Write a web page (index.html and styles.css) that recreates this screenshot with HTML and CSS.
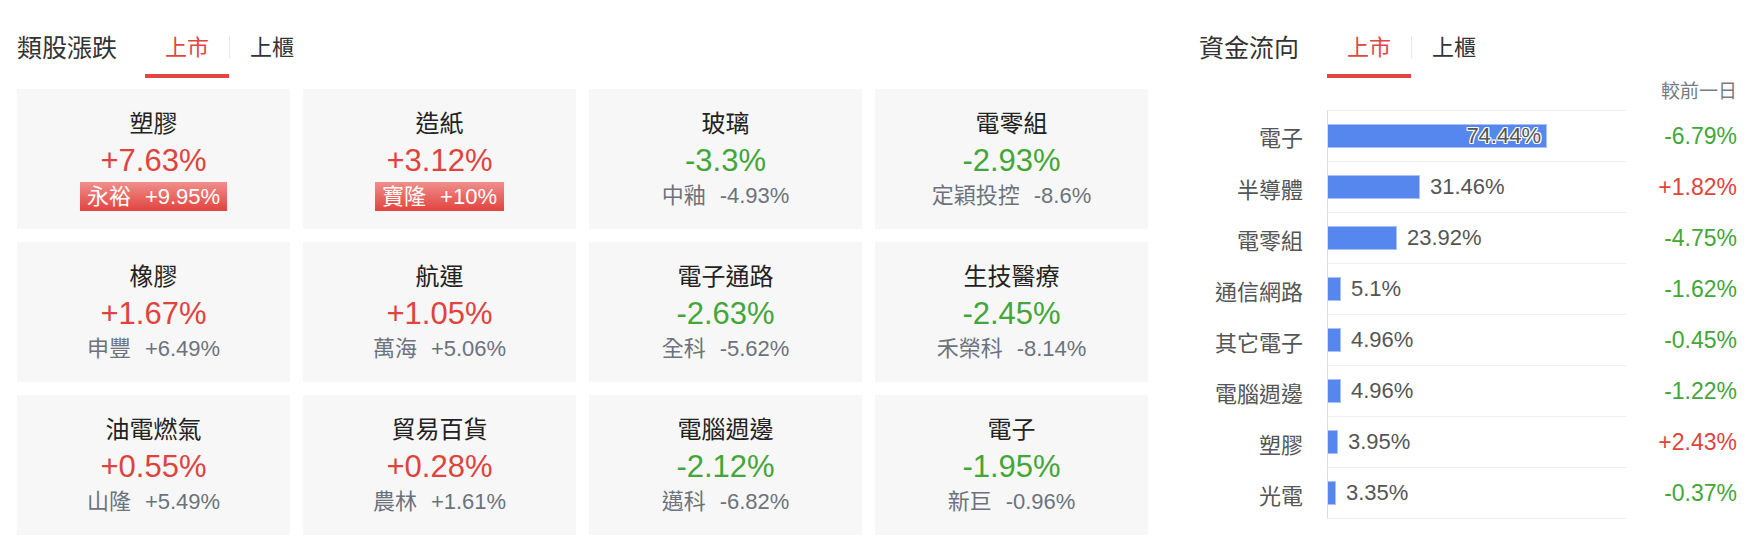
FILE: index.html
```html
<!DOCTYPE html>
<html lang="zh-Hant">
<head>
	<meta charset="UTF-8">
	<meta name="viewport" content="width=device-width, initial-scale=1.0">
	<link rel="stylesheet" href="styles.css">
</head>
<body>
	<div class="page">
		<section class="sectors">
			<div class="head">
				<h2>類股漲跌</h2>
				<ul class="tabs">
					<li class="on">上市</li>
					<li class="sep"></li>
					<li>上櫃</li>
				</ul>
			</div>
			<div class="grid">
				<div class="card up">
					<div class="name">塑膠</div>
					<div class="pct">+7.63%</div>
					<div class="lead limit"><span>永裕</span><b>+9.95%</b></div>
				</div>
				<div class="card up">
					<div class="name">造紙</div>
					<div class="pct">+3.12%</div>
					<div class="lead limit"><span>寶隆</span><b>+10%</b></div>
				</div>
				<div class="card down">
					<div class="name">玻璃</div>
					<div class="pct">-3.3%</div>
					<div class="lead"><span>中釉</span><b>-4.93%</b></div>
				</div>
				<div class="card down">
					<div class="name">電零組</div>
					<div class="pct">-2.93%</div>
					<div class="lead"><span>定穎投控</span><b>-8.6%</b></div>
				</div>

				<div class="card up">
					<div class="name">橡膠</div>
					<div class="pct">+1.67%</div>
					<div class="lead"><span>申豐</span><b>+6.49%</b></div>
				</div>
				<div class="card up">
					<div class="name">航運</div>
					<div class="pct">+1.05%</div>
					<div class="lead"><span>萬海</span><b>+5.06%</b></div>
				</div>
				<div class="card down">
					<div class="name">電子通路</div>
					<div class="pct">-2.63%</div>
					<div class="lead"><span>全科</span><b>-5.62%</b></div>
				</div>
				<div class="card down">
					<div class="name">生技醫療</div>
					<div class="pct">-2.45%</div>
					<div class="lead"><span>禾榮科</span><b>-8.14%</b></div>
				</div>

				<div class="card up">
					<div class="name">油電燃氣</div>
					<div class="pct">+0.55%</div>
					<div class="lead"><span>山隆</span><b>+5.49%</b></div>
				</div>
				<div class="card up">
					<div class="name">貿易百貨</div>
					<div class="pct">+0.28%</div>
					<div class="lead"><span>農林</span><b>+1.61%</b></div>
				</div>
				<div class="card down">
					<div class="name">電腦週邊</div>
					<div class="pct">-2.12%</div>
					<div class="lead"><span>邁科</span><b>-6.82%</b></div>
				</div>
				<div class="card down">
					<div class="name">電子</div>
					<div class="pct">-1.95%</div>
					<div class="lead"><span>新巨</span><b>-0.96%</b></div>
				</div>
			</div>
		</section>

		<section class="flow">
			<div class="head">
				<h2>資金流向</h2>
				<ul class="tabs">
					<li class="on">上市</li>
					<li class="sep"></li>
					<li>上櫃</li>
				</ul>
			</div>
			<div class="cmp">較前一日</div>
			<ul class="chart">
				<li>
					<span class="lbl">電子</span>
					<span class="plot"><i class="bar" style="width:219px"><em>74.44%</em></i></span>
					<span class="chg down">-6.79%</span>
				</li>
				<li>
					<span class="lbl">半導體</span>
					<span class="plot"><i class="bar" style="width:92px"></i><em>31.46%</em></span>
					<span class="chg up">+1.82%</span>
				</li>
				<li>
					<span class="lbl">電零組</span>
					<span class="plot"><i class="bar" style="width:69px"></i><em>23.92%</em></span>
					<span class="chg down">-4.75%</span>
				</li>
				<li>
					<span class="lbl">通信網路</span>
					<span class="plot"><i class="bar" style="width:13px"></i><em>5.1%</em></span>
					<span class="chg down">-1.62%</span>
				</li>
				<li>
					<span class="lbl">其它電子</span>
					<span class="plot"><i class="bar" style="width:13px"></i><em>4.96%</em></span>
					<span class="chg down">-0.45%</span>
				</li>
				<li>
					<span class="lbl">電腦週邊</span>
					<span class="plot"><i class="bar" style="width:13px"></i><em>4.96%</em></span>
					<span class="chg down">-1.22%</span>
				</li>
				<li>
					<span class="lbl">塑膠</span>
					<span class="plot"><i class="bar" style="width:10px"></i><em>3.95%</em></span>
					<span class="chg up">+2.43%</span>
				</li>
				<li>
					<span class="lbl">光電</span>
					<span class="plot"><i class="bar" style="width:8px"></i><em>3.35%</em></span>
					<span class="chg down">-0.37%</span>
				</li>
			</ul>
		</section>
	</div>
</body>
</html>
```

FILE: styles.css
```css
body {
	margin: 0;
	background: #fff;
	font-family: 'Liberation Sans', 'Noto Sans CJK TC', sans-serif;
	color: #222;
}
ul {
	list-style: none;
	margin: 0;
	padding: 0;
}
.page {
	display: flex;
	align-items: flex-start;
	padding-left: 17px;
}

/* section header with tabs */
.head {
	display: flex;
	align-items: flex-start;
	height: 78px;
}
.head h2 {
	margin: 0 28px 0 0;
	padding-top: 33px;
	font-size: 25px;
	line-height: 30px;
	font-weight: 400;
	color: #333;
}
.tabs {
	display: flex;
	align-items: flex-start;
}
.tabs li {
	padding: 33px 20px 0 20px;
	height: 41px;
	font-size: 22px;
	line-height: 30px;
	color: #333;
	border-bottom: 4px solid transparent;
}
.tabs li.on {
	color: #e0463f;
	border-bottom-color: #e0463f;
}
.tabs li.sep {
	padding: 0;
	margin-top: 36px;
	width: 1px;
	height: 22px;
	border: 0;
	background: #e8e8e8;
}

/* sector cards */
.sectors {
	width: 1131px;
}
.grid {
	margin-top: 11px;
	display: grid;
	grid-template-columns: repeat(4, 273px);
	grid-auto-rows: 140px;
	gap: 13px;
}
.card {
	background: #f7f7f7;
	display: flex;
	flex-direction: column;
	align-items: center;
	justify-content: center;
}
.card .name {
	font-size: 24px;
	line-height: 34px;
	color: #222;
}
.card .pct {
	font-size: 31px;
	line-height: 40px;
}
.card.up .pct {
	color: #e0433d;
}
.card.down .pct {
	color: #42a638;
}
.card .lead {
	height: 30px;
	padding: 0 7px;
	font-size: 22px;
	line-height: 30px;
	white-space: nowrap;
	color: #6c737d;
}
.card .lead b {
	font-weight: 400;
	margin-left: 14px;
}
.card .lead.limit {
	height: 29px;
	line-height: 29px;
	margin-top: 1px;
	color: #fff;
	background: linear-gradient(#ef8f8b, #e2433e);
}

/* money flow chart */
.flow {
	margin-left: 51px;
	width: 538px;
}
.cmp {
	text-align: right;
	font-size: 19px;
	line-height: 28px;
	color: #767c85;
	margin-bottom: 4px;
}
.chart li {
	display: flex;
	align-items: stretch;
}
.chart .lbl {
	width: 104px;
	margin-right: 24px;
	text-align: right;
	align-self: center;
	font-size: 22px;
	color: #555;
}
.chart .plot {
	width: 298px;
	height: 50px;
	display: flex;
	align-items: center;
	border-left: 1px solid #dcdcdc;
	border-bottom: 1px solid #eeeeee;
}
.chart li:first-child .plot {
	border-top: 1px solid #eeeeee;
}
.chart .bar {
	display: block;
	box-sizing: border-box;
	height: 24px;
	background: #5587ee;
	border: 1px solid #a9c1f4;
	border-left: 0;
	text-align: right;
}
.chart em {
	font-style: normal;
	font-size: 22px;
	color: #555;
	margin-left: 10px;
	line-height: 24px;
}
.chart .bar em {
	display: block;
	margin: 0 5px 0 0;
	line-height: 22px;
	color: #555;
	text-shadow: 1px 0 #fff, -1px 0 #fff, 0 1px #fff, 0 -1px #fff,
		1px 1px #fff, -1px -1px #fff, 1px -1px #fff, -1px 1px #fff;
}
.chart .chg {
	flex: 1;
	text-align: right;
	align-self: center;
	font-size: 23px;
}
.chg.up {
	color: #e0433d;
}
.chg.down {
	color: #42a638;
}
```
